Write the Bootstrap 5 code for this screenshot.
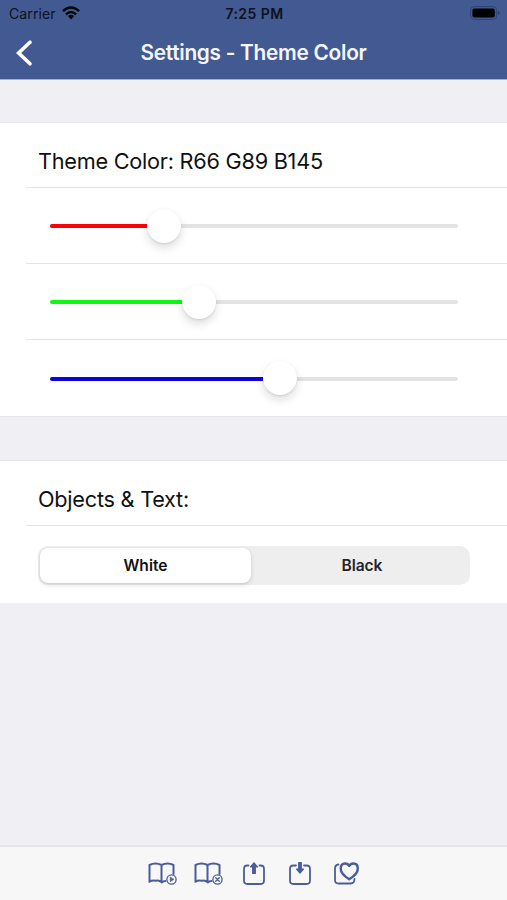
<!DOCTYPE html>
<html lang="en">
<head>
<meta charset="utf-8">
<meta name="viewport" content="width=device-width, initial-scale=1">
<title>Settings - Theme Color</title>
<link href="https://cdn.jsdelivr.net/npm/bootstrap@5.3.0/dist/css/bootstrap.min.css" rel="stylesheet">
<style>
  body { font-family: Inter, "Liberation Sans", sans-serif; background: #efeff4; color: #111; }
  .topbar { background: #425991; height: 79px; box-shadow: 0 1px 0 #a9b2cd; }
  .status { height: 27px; color: #0d1220; font-size: 14px; line-height: 27px; padding: 0 7px 0 9px; }
  .status > * { flex: 1 1 0; }
  .carrier { letter-spacing: .12px; }
  .clock { font-size: 14px; letter-spacing: .45px; }
  .status svg { margin-top: -2px; }
  .wifi { margin-left: 6px; }
  .titlebar { height: 52px; padding: 0 15px; }
  .titlebar h1 { font-size: 20.8px; letter-spacing: -.27px; line-height: 52px; color: #f4f6ff; }
  .titlebar > .side { width: 18px; }
  .group { border-top: 1px solid #e6e6ea; margin-top: 43px; }
  .line { border-bottom: 1px solid #e4e4e6; margin-left: 26px; }
  .label { height: 65px; font-size: 21.7px; letter-spacing: -.25px; line-height: 76px; padding-left: 12px; }
  .group + .group { margin-top: 44px; }
  .slide { height: 76px; padding: 1px 49px 0 24px; }
  .track { height: 4px; border-radius: 2px; background: #e3e3e4; }
  .fill { height: 4px; border-radius: 2px 0 0 2px; }
  .thumb { width: 34px; height: 34px; margin-top: -1px; background: #fff; box-shadow: 0 5px 10px rgba(0,0,0,.13), 0 1px 2px rgba(0,0,0,.1); }
  .fill.red { background: #fb0007; } .fill.green { background: #0bfa0e; } .fill.blue { background: #0b04dc; }
  .last { margin-left: 26px; }
  .group-end { box-shadow: 0 1px 0 #e4e4e8; }
  .segwrap { padding: 20px 37px 18px 38px; }
  .seg { height: 39px; border-radius: 10px; background: #eeeeef; padding: 2px; }
  .seg button { border: 0; background: none; font-size: 15.6px; font-weight: 600; color: #242426; border-radius: 8px; padding: 0; }
  .seg button:first-child { flex: 0 0 211px; }
  .seg button:last-child { padding-left: 5px; letter-spacing: -.1px; }
  .seg .on { background: #fff; color: #111; box-shadow: 0 2px 4px rgba(0,0,0,.13), 0 0 1px rgba(0,0,0,.15); }
  .tools { height: 54px; background: #f7f7f8; box-shadow: 0 -1px 0 #e4e4e9; border-top: 1px solid #e4e4e9; }
  .tools svg { fill: none; stroke: #4b5d98; stroke-width: 2; stroke-linecap: round; stroke-linejoin: round; }
  .tools button { border: 0; background: none; padding: 0; width: 46px; line-height: 0; }
</style>
</head>
<body class="vh-100 d-flex flex-column overflow-hidden">
<header class="topbar flex-shrink-0">
  <div class="status d-flex align-items-center">
    <div class="d-flex align-items-center">
      <span class="carrier">Carrier</span>
      <svg class="wifi" width="18" height="14" viewBox="0 0 18 14" fill="none" stroke="#050608" stroke-width="2.4"><path d="M.9 5.2Q9-2.4 17.1 5.2M3.9 8.3Q9 3.5 14.1 8.3"/><path d="M5.9 10.1Q9 7.5 12.1 10.1L9 13.4z" fill="#050608" stroke="none"/></svg>
    </div>
    <div class="clock text-center fw-semibold">7:25 PM</div>
    <div class="d-flex justify-content-end">
      <svg width="30" height="14" viewBox="0 0 30 14"><rect x=".6" y=".6" width="26" height="12.8" rx="3.6" fill="none" stroke="#2f4274"/><rect x="2.4" y="2.4" width="22.4" height="9.2" rx="2" fill="#000"/><path d="M28 5v4q1.5-.5 1.5-2T28 5z" fill="#2b3b68"/></svg>
    </div>
  </div>
  <div class="titlebar d-flex align-items-center justify-content-between">
    <a href="#" class="side lh-1" aria-label="Back"><svg width="17" height="27" viewBox="0 0 17 27" fill="none" stroke="#fff" stroke-width="3.6"><path d="M15 2.2L3.600 13L15 23.800" stroke-linecap="round"/></svg></a>
    <h1 class="m-0 fw-semibold text-nowrap">Settings - Theme Color</h1>
    <span class="side"></span>
  </div>
</header>
<main class="flex-grow-1">
  <section class="group group-end bg-white">
    <div class="line label">Theme Color: R66 G89 B145</div>
    <div class="line slide d-flex align-items-center"><div class="track w-100 d-flex align-items-center"><div class="fill red" style="width:23.8%"></div><div class="thumb rounded-circle flex-shrink-0"></div></div></div>
    <div class="line slide d-flex align-items-center"><div class="track w-100 d-flex align-items-center"><div class="fill green" style="width:32.3%"></div><div class="thumb rounded-circle flex-shrink-0"></div></div></div>
    <div class="last slide d-flex align-items-center"><div class="track w-100 d-flex align-items-center"><div class="fill blue" style="width:52.2%"></div><div class="thumb rounded-circle flex-shrink-0"></div></div></div>
  </section>
  <section class="group bg-white">
    <div class="line label">Objects &amp; Text:</div>
    <div class="segwrap"><div class="seg d-flex"><button class="on">White</button><button class="flex-grow-1">Black</button></div></div>
  </section>
</main>
<footer class="tools flex-shrink-0 d-flex align-items-center justify-content-center">
  <button aria-label="Open book"><svg width="30" height="26" viewBox="0 0 30 26"><path d="M18.5 20Q16 20 15 21.500Q12 18.600 8.500 19.700Q5 19 2.500 20.800V4Q8.500 .9 14.500 4Q20.500 .9 26.500 4V13M14.500 4V20.500"/><circle cx="24.500" cy="18.500" r="4.600" stroke-width="1.300"/><path d="M23.200 16.300V20.700L26.700 18.500z" fill="#4b5d98" stroke-width=".6"/></svg></button>
  <button aria-label="Close book"><svg width="30" height="26" viewBox="0 0 30 26"><path d="M18.500 20Q16 20 15 21.500Q12 18.600 8.500 19.700Q5 19 2.500 20.800V4Q8.500 .9 14.500 4Q20.500 .9 26.500 4V13M14.500 4V20.500"/><circle cx="24.500" cy="18.500" r="4.600" stroke-width="1.300"/><path d="M22.700 16.700L26.300 20.300M26.300 16.700L22.700 20.300" stroke-width="1.300"/></svg></button>
  <button aria-label="Export"><svg width="26" height="26" viewBox="0 0 26 26"><path stroke-width="1.800" d="M7.500 4.500H6.500Q3 4.500 3 8V19.500Q3 23 6.500 23H19.500Q23 23 23 19.500V8Q23 4.500 19.500 4.500H18.500"/><path d="M11.700 12.500V6H9.500L13 1.800L16.500 6H14.300V12.500z" fill="#4b5d98" stroke-width="1.200"/></svg></button>
  <button aria-label="Import"><svg width="26" height="26" viewBox="0 0 26 26"><path stroke-width="1.800" d="M9 4.500H6.500Q3 4.500 3 8V19.500Q3 23 6.500 23H19.500Q23 23 23 19.500V8Q23 4.500 19.500 4.500H17"/><path d="M11.700 1.500V8H9.500L13 12.200L16.500 8H14.300V1.500z" fill="#4b5d98" stroke-width="1.200"/></svg></button>
  <button aria-label="Favorites"><svg width="28" height="26" viewBox="0 0 28 26"><path stroke-width="1.800" d="M6.500 3.500Q3 4 3 7.500V19Q3 22.500 6.500 22.500H18.500Q22.500 22.500 22.500 18"/><path d="M17.200 18.300Q8.700 13 8.700 7.500Q8.700 2.500 13 2.500Q16 2.500 17.200 5Q18.500 2.500 21.500 2.500Q25.800 2.500 25.800 7.500Q25.800 13 17.200 18.300z" stroke-width="2.400"/></svg></button>
</footer>
<script src="https://cdn.jsdelivr.net/npm/bootstrap@5.3.0/dist/js/bootstrap.bundle.min.js"></script>
</body>
</html>
